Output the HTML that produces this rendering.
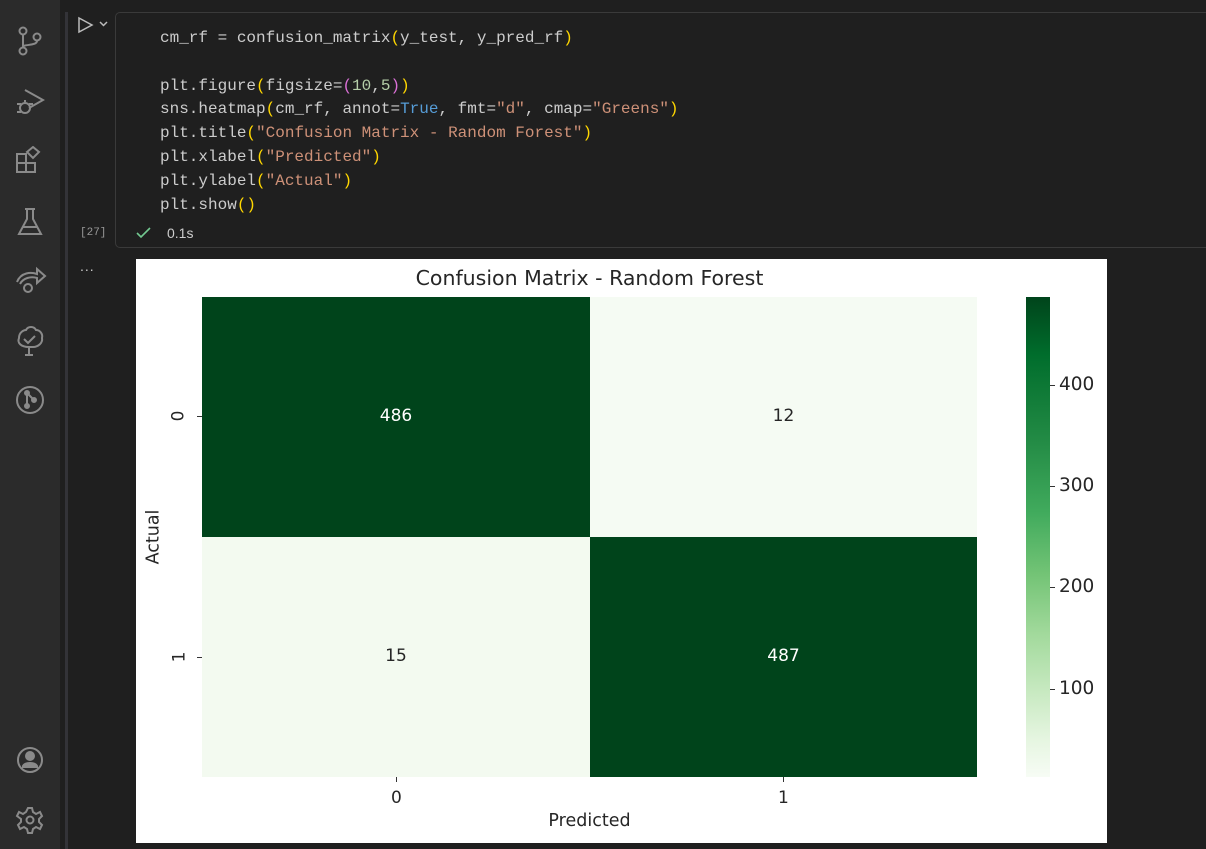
<!DOCTYPE html>
<html><head><meta charset="utf-8"><style>
*{margin:0;padding:0;box-sizing:border-box}
body{width:1206px;height:849px;background:#1f1f1f;position:relative;overflow:hidden;font-family:"Liberation Sans",sans-serif}
.side{position:absolute;left:0;top:0;width:60px;height:849px;background:#2b2b2b}
.vl{position:absolute;left:65px;top:12px;width:3px;height:837px;background:#333338}
.cell{position:absolute;left:115px;top:12px;width:1100px;height:236px;border:1px solid #3a3a3a;border-radius:5px;background:#1f1f1f}
.code{position:absolute;left:160px;top:27px;font-family:"Liberation Mono",monospace;font-size:16px;line-height:23.8px;color:#cccccc;white-space:pre}
.s{color:#ce9178}.y{color:#ffd700}.p{color:#da70d6}.b{color:#569cd6}.n{color:#b5cea8}
.ic{position:absolute;left:15px}
.fig{position:absolute;left:136px;top:259px;width:971px;height:584px;background:#fff}
.t{position:absolute;font-family:"DejaVu Sans",sans-serif;color:#262626}
</style></head><body>
<div class="side"></div>
<div class="vl"></div>
<svg class="ic" style="top:25px" width="30" height="32" viewBox="0 0 30 32" fill="none" stroke="#8a8a8a" stroke-width="2"><circle cx="8" cy="6" r="3.5"/><circle cx="8" cy="26" r="3.5"/><circle cx="22" cy="12" r="3.5"/><path d="M8 10v12M22 16c0 5-14 3-14 6"/></svg>
<svg class="ic" style="top:86px" width="30" height="32" viewBox="0 0 30 32" fill="none" stroke="#8a8a8a" stroke-width="2"><path d="M10 4l18 10-14 8"/><circle cx="10" cy="22" r="5"/><path d="M2 18h4M2 26h4M14 18h4M10 16v-2"/></svg>
<svg class="ic" style="top:146px" width="30" height="30" viewBox="0 0 30 30" fill="none" stroke="#8a8a8a" stroke-width="2"><rect x="2" y="8" width="9" height="9"/><rect x="2" y="17" width="9" height="9"/><rect x="11" y="17" width="9" height="9"/><path d="M12 6l6-5 6 5-6 6z"/></svg>
<svg class="ic" style="top:207px" width="30" height="30" viewBox="0 0 30 30" fill="none" stroke="#8a8a8a" stroke-width="2"><path d="M10 2h10M12 2v10L4 27h22L18 12V2M7 20h16"/></svg>
<svg class="ic" style="top:264px" width="32" height="34" viewBox="0 0 32 34" fill="none" stroke="#8a8a8a" stroke-width="2"><path d="M2 18c4-10 14-10 20-8V5l8 7-8 7v-5c-6-2-14 0-17 6"/><circle cx="13" cy="24" r="4"/></svg>
<svg class="ic" style="top:325px" width="30" height="32" viewBox="0 0 30 32" fill="none" stroke="#8a8a8a" stroke-width="2"><path d="M14 22c-8 0-12-4-10-9 0-6 5-8 7-8 2-4 8-4 10 0 4 0 7 4 6 8 1 5-4 9-9 9zM14 22v8M10 30h8M9 14l4 4 7-7"/></svg>
<svg class="ic" style="top:384px" width="32" height="32" viewBox="0 0 32 32" fill="none" stroke="#8a8a8a" stroke-width="2"><circle cx="15" cy="16" r="13"/><circle cx="12" cy="9" r="2" fill="#8a8a8a"/><circle cx="12" cy="22" r="2" fill="#8a8a8a"/><circle cx="19" cy="16" r="2" fill="#8a8a8a"/><path d="M12 9v13M12 9l7 7"/></svg>
<svg class="ic" style="top:744px" width="32" height="32" viewBox="0 0 32 32" fill="none" stroke="#8a8a8a" stroke-width="2"><circle cx="15" cy="16" r="12"/><circle cx="15" cy="12" r="4" fill="#8a8a8a"/><path d="M8 22c2-4 12-4 14 0v1H8z" fill="#8a8a8a"/></svg>
<svg class="ic" style="top:805px" width="32" height="32" viewBox="0 0 32 32" fill="none" stroke="#8a8a8a" stroke-width="2"><circle cx="15" cy="15" r="3.5"/><path d="M13 3h4l1 4 3 2 4-2 2 4-3 3v3l3 3-2 4-4-2-3 2-1 4h-4l-1-4-3-2-4 2-2-4 3-3v-3L2 11l2-4 4 2 3-2z"/></svg>
<svg style="position:absolute;left:76px;top:16px" width="36" height="18" viewBox="0 0 36 18" fill="none" stroke="#bbb" stroke-width="1.5"><path d="M3 2l13 7-13 7z"/><path d="M24 6l3.5 3.5L31 6"/></svg>
<div style="position:absolute;left:80px;top:227px;font-family:'Liberation Mono',monospace;font-size:11px;color:#999">[27]</div>
<div style="position:absolute;left:80px;top:258px;font-size:14px;color:#ccc;letter-spacing:1px">...</div>
<div class="cell"></div>
<div class="code">cm_rf = confusion_matrix<span class="y">(</span>y_test, y_pred_rf<span class="y">)</span>

plt.figure<span class="y">(</span>figsize=<span class="p">(</span><span class="n">10</span>,<span class="n">5</span><span class="p">)</span><span class="y">)</span>
sns.heatmap<span class="y">(</span>cm_rf, annot=<span class="b">True</span>, fmt=<span class="s">"d"</span>, cmap=<span class="s">"Greens"</span><span class="y">)</span>
plt.title<span class="y">(</span><span class="s">"Confusion Matrix - Random Forest"</span><span class="y">)</span>
plt.xlabel<span class="y">(</span><span class="s">"Predicted"</span><span class="y">)</span>
plt.ylabel<span class="y">(</span><span class="s">"Actual"</span><span class="y">)</span>
plt.show<span class="y">()</span></div>
<svg style="position:absolute;left:136px;top:226px" width="16" height="14" viewBox="0 0 16 14" fill="none" stroke="#73c991" stroke-width="1.6"><path d="M1 7l4 4 9-9"/></svg>
<div style="position:absolute;left:167px;top:225px;font-size:14px;color:#ccc">0.1s</div>

<div class="fig">
  <div style="position:absolute;left:66px;top:38px;width:388px;height:240px;background:#00441b"></div>
  <div style="position:absolute;left:454px;top:38px;width:387px;height:240px;background:#f5fbf3"></div>
  <div style="position:absolute;left:66px;top:278px;width:388px;height:240px;background:#f3faf0"></div>
  <div style="position:absolute;left:454px;top:278px;width:387px;height:240px;background:#00441b"></div>
  <div class="t" style="left:66px;width:775px;top:7px;text-align:center;font-size:20.5px;white-space:nowrap">Confusion Matrix - Random Forest</div>
  <div class="t" style="left:66px;width:388px;top:147px;text-align:center;font-size:17px;color:#fff">486</div>
  <div class="t" style="left:454px;width:387px;top:147px;text-align:center;font-size:17px">12</div>
  <div class="t" style="left:66px;width:388px;top:387px;text-align:center;font-size:17px">15</div>
  <div class="t" style="left:454px;width:387px;top:387px;text-align:center;font-size:17px;color:#fff">487</div>
  <div style="position:absolute;left:260px;top:518px;width:1px;height:5px;background:#333"></div>
  <div style="position:absolute;left:647px;top:518px;width:1px;height:5px;background:#333"></div>
  <div class="t" style="left:255px;top:529px;font-size:17px">0</div>
  <div class="t" style="left:642px;top:529px;font-size:17px">1</div>
  <div class="t" style="left:66px;width:775px;top:552px;text-align:center;font-size:17.5px">Predicted</div>
  <div style="position:absolute;left:61px;top:157px;width:5px;height:1px;background:#333"></div>
  <div style="position:absolute;left:61px;top:398px;width:5px;height:1px;background:#333"></div>
  <div class="t" style="left:37px;top:147px;font-size:17px;transform:rotate(-90deg)">0</div>
  <div class="t" style="left:38px;top:388px;font-size:17px;transform:rotate(-90deg)">1</div>
  <div class="t" style="left:-10px;top:268px;font-size:17.5px;transform:rotate(-90deg)">Actual</div>
  <div style="position:absolute;left:890px;top:38px;width:24px;height:480px;background:linear-gradient(#00441b 0%,#006d2c 12%,#238b45 30%,#41ab5d 45%,#74c476 58%,#a1d99b 70%,#c7e9c0 82%,#e5f5e0 92%,#f7fcf5 100%)"></div>
  <div style="position:absolute;left:914px;top:126px;width:5px;height:1px;background:#333"></div>
  <div style="position:absolute;left:914px;top:227px;width:5px;height:1px;background:#333"></div>
  <div style="position:absolute;left:914px;top:328px;width:5px;height:1px;background:#333"></div>
  <div style="position:absolute;left:914px;top:430px;width:5px;height:1px;background:#333"></div>
  <div class="t" style="left:923px;top:115px;font-size:18.5px">400</div>
  <div class="t" style="left:923px;top:216px;font-size:18.5px">300</div>
  <div class="t" style="left:923px;top:317px;font-size:18.5px">200</div>
  <div class="t" style="left:923px;top:419px;font-size:18.5px">100</div>
</div>
</body></html>
